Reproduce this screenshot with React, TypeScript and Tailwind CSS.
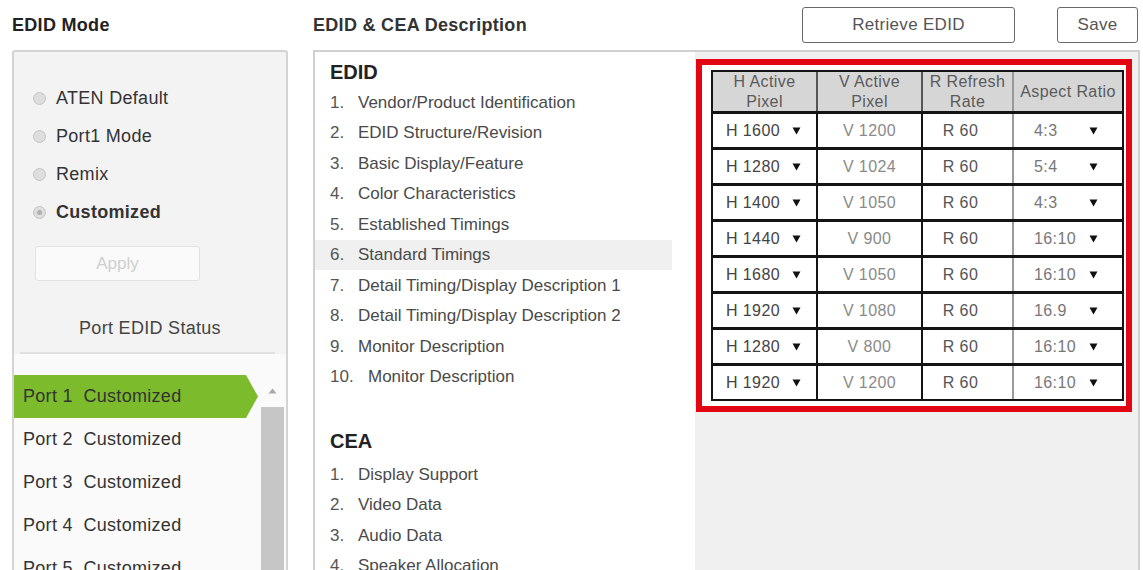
import React from 'react';

const modes = [
  { label: 'ATEN Default', checked: false },
  { label: 'Port1 Mode', checked: false },
  { label: 'Remix', checked: false },
  { label: 'Customized', checked: true },
];

const ports = ['Port 1', 'Port 2', 'Port 3', 'Port 4', 'Port 5'];

const edidItems = [
  'Vendor/Product Identification',
  'EDID Structure/Revision',
  'Basic Display/Feature',
  'Color Characteristics',
  'Established Timings',
  'Standard Timings',
  'Detail Timing/Display Description 1',
  'Detail Timing/Display Description 2',
  'Monitor Description',
  'Monitor Description',
];

const ceaItems = ['Display Support', 'Video Data', 'Audio Data', 'Speaker Allocation'];

const timings = [
  { h: 1600, v: 1200, r: 60, ratio: '4:3' },
  { h: 1280, v: 1024, r: 60, ratio: '5:4' },
  { h: 1400, v: 1050, r: 60, ratio: '4:3' },
  { h: 1440, v: 900, r: 60, ratio: '16:10' },
  { h: 1680, v: 1050, r: 60, ratio: '16:10' },
  { h: 1920, v: 1080, r: 60, ratio: '16.9' },
  { h: 1280, v: 800, r: 60, ratio: '16:10' },
  { h: 1920, v: 1200, r: 60, ratio: '16:10' },
];

function DownArrow() {
  return (
    <svg width="9" height="9" viewBox="0 0 9 9" className="shrink-0">
      <path d="M0.5 1.5 L8.5 1.5 L4.5 8.5 Z" fill="#111" />
    </svg>
  );
}

function Radio({ checked }: { checked: boolean }) {
  return (
    <span className="w-[13px] h-[13px] rounded-full border border-[#c4c4c4] bg-[#dedede] flex items-center justify-center shrink-0">
      {checked && <span className="w-[5px] h-[5px] rounded-full bg-[#b0b0b0]" />}
    </span>
  );
}

function ModePanel() {
  return (
    <div className="w-[288px] pl-[12px] shrink-0">
      <div className="h-[50px] flex items-center text-[18px] tracking-[0.3px] font-bold text-[#222]">EDID Mode</div>
      <div className="h-[530px] border-2 border-[#d4d4d4] rounded-[3px] bg-[#f3f3f3] pt-[27px]">
        {modes.map((m) => (
          <div key={m.label} className="h-[38px] flex items-center pl-[19px] gap-[10px]">
            <Radio checked={m.checked} />
            <span className={`text-[18px] tracking-[0.3px] text-[#333] ${m.checked ? 'font-bold' : ''}`}>{m.label}</span>
          </div>
        ))}
        <button className="mt-[15px] ml-[21px] w-[165px] h-[35px] border border-[#e2e2e2] rounded-[3px] bg-[#fafafa] text-[17px] text-[#cfcfcf]">
          Apply
        </button>
        <div className="mt-[27px] h-[40px] flex items-center justify-center text-[18px] tracking-[0.3px] text-[#444]">
          Port EDID Status
        </div>
        <div className="mt-[4px] ml-[6px] mr-[11px] h-[2px] bg-[#e0e0e0]" />
        <div className="flex pt-[21px] bg-[#fafafa] h-full">
          <div className="w-[244px]">
            {ports.map((p, i) => (
              <div
                key={p}
                className={`h-[43px] flex items-center pl-[9px] text-[18px] tracking-[0.3px] text-[#333] ${
                  i === 0
                    ? 'bg-[#7cbb2c] [clip-path:polygon(0_0,calc(100%_-_12px)_0,100%_50%,calc(100%_-_12px)_100%,0_100%)]'
                    : ''
                }`}
              >
                {p}&nbsp;&nbsp;Customized
              </div>
            ))}
          </div>
          <div className="w-[28px] flex flex-col items-center">
            <div className="h-[32px] flex items-center justify-center">
              <svg width="9" height="6" viewBox="0 0 9 6">
                <path d="M0.5 5.5 L4.5 0.5 L8.5 5.5 Z" fill="#a8a8a8" />
              </svg>
            </div>
            <div className="w-[23px] flex-1 bg-[#c6c6c6]" />
          </div>
        </div>
      </div>
    </div>
  );
}

function TimingTable() {
  return (
    <div className="w-[413px] border-2 border-[#141414] text-[16px] tracking-[0.4px]">
      <div className="h-[42px] flex bg-[#d6d6d6] border-b-[3px] border-[#141414] text-[#5a5a5a] leading-[20px] text-center">
        <div className="w-[105px] border-r-2 border-[#555] flex flex-col items-center justify-center">
          <span>H Active</span>
          <span>Pixel</span>
        </div>
        <div className="w-[105px] border-r-2 border-[#555] flex flex-col items-center justify-center">
          <span>V Active</span>
          <span>Pixel</span>
        </div>
        <div className="w-[91px] border-r-2 border-[#999] flex flex-col items-center justify-center">
          <span>R Refresh</span>
          <span>Rate</span>
        </div>
        <div className="flex-1 flex items-center justify-center">Aspect Ratio</div>
      </div>
      {timings.map((t, i) => (
        <div
          key={i}
          className={`flex bg-white ${i < timings.length - 1 ? 'h-[36px] border-b-[3px] border-[#141414]' : 'h-[33px]'}`}
        >
          <div className="w-[105px] border-r-2 border-[#141414] flex items-center justify-between pl-[13px] pr-[15px] text-[#444]">
            <span>H {t.h}</span>
            <DownArrow />
          </div>
          <div className="w-[105px] border-r-2 border-[#141414] flex items-center justify-center text-[#8a8a8a]">
            V {t.v}
          </div>
          <div className="w-[91px] border-r-2 border-[#9a9a9a] flex items-center justify-center pr-[14px] text-[#555]">
            R {t.r}
          </div>
          <div className="flex-1 flex items-center justify-between pl-[20px] pr-[24px] text-[#777]">
            <span>{t.ratio}</span>
            <DownArrow />
          </div>
        </div>
      ))}
    </div>
  );
}

function ListItem({ n, text, active }: { n: number; text: string; active?: boolean }) {
  return (
    <div
      className={`h-[30.5px] w-[357px] flex items-center pl-[15px] text-[17px] text-[#4a4a4a] ${active ? 'bg-[#f0f0f0]' : ''}`}
    >
      <span className={`${n >= 10 ? 'w-[38px]' : 'w-[28px]'} text-[#555]`}>{n}.</span>
      <span>{text}</span>
    </div>
  );
}

function DescriptionPanel() {
  return (
    <div className="w-[827px] ml-[25px] shrink-0">
      <div className="h-[50px] flex items-center justify-between pr-[2px]">
        <span className="text-[18px] tracking-[0.3px] font-bold text-[#333]">EDID &amp; CEA Description</span>
        <div className="flex items-center gap-[42px]">
          <button className="w-[213px] h-[36px] border border-[#6a6a6a] rounded-[3px] bg-white text-[17px] tracking-[0.3px] text-[#555]">
            Retrieve EDID
          </button>
          <button className="w-[81px] h-[36px] border border-[#6a6a6a] rounded-[3px] bg-white text-[17px] tracking-[0.3px] text-[#555]">
            Save
          </button>
        </div>
      </div>
      <div className="h-[530px] border-2 border-[#d0d0d0] flex">
        <div className="w-[380px] bg-white pt-[5px]">
          <div className="h-[30px] flex items-center pl-[15px] text-[20px] font-bold text-[#222]">EDID</div>
          {edidItems.map((t, i) => (
            <ListItem key={i} n={i + 1} text={t} active={i === 5} />
          ))}
          <div className="mt-[34px] h-[30px] flex items-center pl-[15px] text-[20px] font-bold text-[#222]">CEA</div>
          <div className="mt-[3px]">
            {ceaItems.map((t, i) => (
              <ListItem key={i} n={i + 1} text={t} />
            ))}
          </div>
        </div>
        <div className="flex-1 bg-[#f0f0f0] pt-[7px] pl-[1px]">
          <div className="w-[436px] border-[6px] border-[#e30613] bg-white pl-[3px] pr-[2px] pt-[5px] pb-[5px]">
            <div className="pl-[6px]">
              <TimingTable />
            </div>
          </div>
        </div>
      </div>
    </div>
  );
}

export default function App() {
  return (
    <div className="w-[1143px] h-[570px] overflow-hidden bg-white flex font-['Liberation_Sans',Arial,sans-serif]">
      <ModePanel />
      <DescriptionPanel />
    </div>
  );
}
